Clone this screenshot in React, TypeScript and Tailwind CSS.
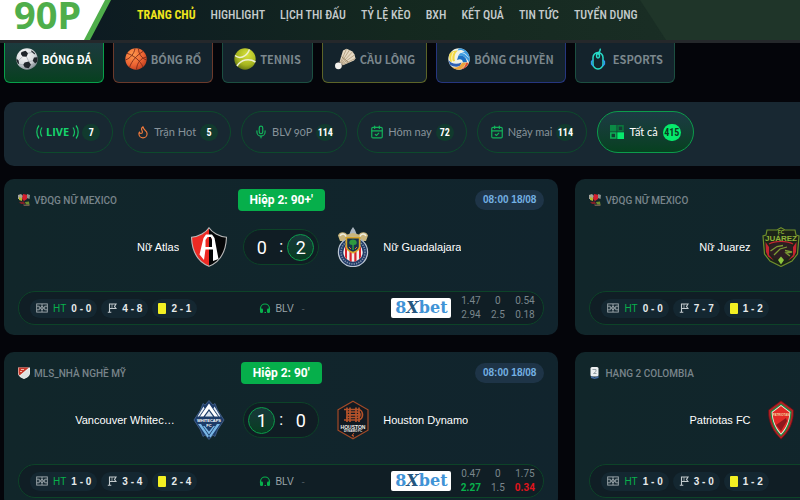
import type { ReactNode } from 'react'
import { CalendarCheck, Flame, Mic } from 'lucide-react'

interface Team {
  name: string
  crest: ReactNode
}

interface Match {
  league: string
  leagueIcon: ReactNode
  period: string
  time: string
  home: Team
  away: Team
  score: [number, number]
  leader: 0 | 1
  halfTime: string
  corners: string
  cards: string
  odds: { value: string; tone?: 'up' | 'down' }[][]
}

/* ---------- Sport icons ---------- */

const SoccerIcon = () => (
  <svg viewBox="0 0 22 22" className="size-[22px] shrink-0">
    <defs>
      <radialGradient id="soccer" cx="0.4" cy="0.3" r="0.75">
        <stop offset="0" stopColor="#ffffff" />
        <stop offset="0.6" stopColor="#d5d9dc" />
        <stop offset="1" stopColor="#77828a" />
      </radialGradient>
    </defs>
    <circle cx="11" cy="11" r="10.7" fill="url(#soccer)" />
    <g fill="#20262b">
      <path d="M5.5 4 9.6 2.8 12 5.2 10.6 8.8 6.6 8.6 4.8 6z" />
      <path d="M15.6 2.2 19 5.3 18.6 6.4 15.2 3.4z" />
      <path d="M18 9.5 21.6 9.2 21.4 13.6 19.2 15.4 16.7 12.8z" />
      <path d="M8.6 14.4 12.8 13.6 15 16.8 12.7 20.2 8.8 19.4 7.2 16.8z" />
      <path d="M.5 10.4 2.6 12.4 3.2 16.2 1.6 15.2.4 12.4z" />
    </g>
    <path d="M10.6 8.8 12.8 13.6M12 5.2l4-.8M16.7 12.8 12.8 13.6M6.6 8.6 2.6 12.4M7.2 16.8l-4-.6M15 16.8l4.2-1.4" stroke="#98a1a7" strokeWidth=".6" fill="none" />
  </svg>
)

const BasketballIcon = () => (
  <svg viewBox="0 0 22 22" className="size-[22px] shrink-0">
    <defs>
      <radialGradient id="basket" cx="0.35" cy="0.3" r="0.8">
        <stop offset="0" stopColor="#ff9a4c" />
        <stop offset="0.6" stopColor="#ec6333" />
        <stop offset="1" stopColor="#b93a1c" />
      </radialGradient>
    </defs>
    <circle cx="11" cy="11" r="10.7" fill="url(#basket)" />
    <g fill="none" stroke="#7c2a18" strokeWidth=".9">
      <path d="M2 5.3C8 7.2 15 12 18 19" />
      <path d="M18.3 3.2C12 7 6.5 13 4.5 19.5" />
      <path d="M10 .5C9 6 5.5 10 .5 12" />
      <path d="M21.5 9C16 10 12 14.5 11.5 21.5" />
      <path d="M13.5.7C13.5 6 17 10.5 21.6 12" />
    </g>
  </svg>
)

const TennisIcon = () => (
  <svg viewBox="0 0 22 22" className="size-[22px] shrink-0">
    <defs>
      <radialGradient id="tennis" cx="0.6" cy="0.3" r="0.8">
        <stop offset="0" stopColor="#d8e23c" />
        <stop offset="0.6" stopColor="#a5b51f" />
        <stop offset="1" stopColor="#56670f" />
      </radialGradient>
    </defs>
    <circle cx="11" cy="11" r="10.7" fill="url(#tennis)" />
    <g fill="none" stroke="#eef0cf" strokeWidth="1.5">
      <path d="M1 7.5C5 11 12 10 15.5 1.5" />
      <path d="M3 18C7 11.5 15 10 21.5 14" />
    </g>
  </svg>
)

const ShuttleIcon = () => (
  <svg viewBox="0 0 22 22" className="size-[22px] shrink-0">
    <path d="M5.5 14 9 2.5 12.5.8 15.5 2 18.5 3.5 20.5 6.5 21.5 10.5 20 12.5 8.5 17.5z" fill="#e6d9c3" />
    <path d="M6.5 14.5 12.5 1M7 15 15.5 2M7.5 15.5 18.5 3.8M8 16 20.5 7M8.3 16.8 21.3 10.5" stroke="#a58f6f" strokeWidth=".7" />
    <path d="M7.5 8.5 14.5 14.5" stroke="#8d7857" strokeWidth=".8" />
    <path d="M4.8 13.2 9.2 17.4 7.8 19 3.3 14.8z" fill="#3b3a38" />
    <circle cx="4.4" cy="17.8" r="3.4" fill="#f3f1ec" />
  </svg>
)

const VolleyballIcon = () => (
  <svg viewBox="0 0 22 22" className="size-[22px] shrink-0">
    <circle cx="11" cy="11" r="10.7" fill="#eef1e6" />
    <path d="M11 .3C17 .3 21.7 5 21.7 11L21 14.5C19 10 16 7 10.5 7.5 12 4.5 15 3.5 17 3.8 14.5 1.8 12 1.5 9.5 2.5z" fill="#3f9de0" />
    <path d="M10.5 7.5C16 7 18.5 10 19 14L15 14.5C14.5 11.5 12.5 10.5 9 12z" fill="#1c6fc2" />
    <path d="M1.5 6C4.5 2.5 8 2.5 10 2.5 6.5 5.5 6 9 7 13L2.5 14C1 11 1 8 1.5 6z" fill="#f1d743" />
    <path d="M.4 12C3 15.5 8 17 13.5 14.5L12 18C8 19.5 4.5 18.5 2 16.8z" fill="#2d5fb4" />
    <path d="M4 19C8 20.5 12 19 14 14.8L18 14.5C17 18.5 13 21.7 11 21.7 8 21.7 5.5 20.7 4 19z" fill="#eba43c" />
    <path d="M18 14.5 20.8 14.8C19.5 18.5 16.5 21 13 21.5 16 19.5 17.5 17.5 18 14.5z" fill="#de4f2c" />
    <path d="M5.5 4C3.5 7.5 3.3 10.5 4.5 14M13 4.5C15.5 4.5 18.5 6.5 20.5 9.5" fill="none" stroke="#fff" strokeWidth=".7" />
  </svg>
)

const MouseIcon = () => (
  <svg viewBox="0 0 22 22" className="size-[22px] shrink-0" fill="none" stroke="#27dcc8" strokeWidth="1.5">
    <path d="M11 7C11 3.5 13.5 4.5 13.3.6" />
    <rect x="6" y="4.5" width="10" height="16.5" rx="5" />
    <rect x="9.6" y="5" width="2.8" height="5" rx="1.4" />
    <path d="M6 12 4.6 13.5V16L6.3 18M16 12 17.4 13.5V16L15.7 18" stroke="#2f9df0" />
  </svg>
)

/* ---------- Small icons ---------- */

const WaveIcon = ({ flip = false }: { flip?: boolean }) => (
  <svg viewBox="0 0 7 14" className={flip ? 'h-3.5 w-[7px] -scale-x-100' : 'h-3.5 w-[7px]'} fill="none" stroke="#16c765" strokeWidth="1.2">
    <path d="M3 .5C.1 4 .1 10 3 13.5M6 2.5C4 5 4 9 6 11.5" />
  </svg>
)

const TilesIcon = () => (
  <svg viewBox="0 0 14 14" className="size-3.5 shrink-0">
    <rect width="6.5" height="6.5" fill="#0b8a45" />
    <rect x="8" y=".8" width="5" height="5" fill="none" stroke="#0a7a3d" strokeWidth="1.5" />
    <rect x=".8" y="8" width="5" height="5" fill="none" stroke="#0cb357" strokeWidth="1.5" />
    <rect x="7.3" y="7.3" width="6.7" height="6.7" fill="#06ea6c" />
  </svg>
)

const HeadsetIcon = () => (
  <svg viewBox="0 0 12 12" className="size-3 shrink-0">
    <path d="M1.5 8V6.5a4.5 4.5 0 0 1 9 0V8" fill="none" stroke="#08b04c" strokeWidth="1.2" />
    <rect x="1" y="6.5" width="3" height="4.5" rx="1.2" fill="#08b04c" />
    <rect x="8" y="6.5" width="3" height="4.5" rx="1.2" fill="#08b04c" />
    <path d="M5.5 10.5h1.5" stroke="#08b04c" strokeWidth="1.2" />
  </svg>
)

const PitchIcon = () => (
  <svg viewBox="0 0 12 10" className="h-2.5 w-3 shrink-0" fill="none" stroke="#a3adb1" strokeWidth=".9">
    <rect x=".7" y=".9" width="10.6" height="8.2" />
    <path d="M6 .9v8.2M.7 3.2h2.6v3.6H.7M11.3 3.2H8.7v3.6h2.6" />
    <circle cx="6" cy="5" r="1.5" />
  </svg>
)

const CornerIcon = () => (
  <svg viewBox="0 0 10 10" className="size-2.5 shrink-0" fill="none" stroke="#c3cbce" strokeWidth="1.1">
    <path d="M2.5 9.5V1H9L7.5 3.5 9 5.5H2.5M.8 9.3h3.5" />
    <path d="M5 1v4.5" strokeWidth=".7" />
  </svg>
)

const MexicoIcon = () => (
  <svg viewBox="0 0 12 12" className="size-3 shrink-0">
    <path d="M0 1 3 0 5 2 4 5 0 5z" fill="#a5a49c" />
    <path d="M5 0 10 1 9 5 6 7 4 5z" fill="#d41f2e" />
    <path d="M9 0 12 1 11.5 5 9 4z" fill="#8a928e" />
    <path d="M1 3 4 4 4 7 1 6z" fill="#b4b72e" />
    <path d="M1 8 6 7.5 7 10 3 10z" fill="#7f1f26" />
    <path d="M7 8 11 7.5 11.5 11 8 10.5z" fill="#6f8d2f" />
    <path d="M5 10.5h6.5V12H6z" fill="#6d5b4d" />
  </svg>
)

const MlsIcon = () => (
  <svg viewBox="0 0 12 12" className="size-3 shrink-0">
    <path d="M0 .5H12V6C12 9 9 11 6 12 3 11 0 9 0 6z" fill="#f0f0ee" />
    <path d="M.5.5H11L1.5 8.5C.8 7.5.5 6.5.5 5.5z" fill="#c8392b" />
    <path d="M3 2h3v1H3zM2 4h2v1H2z" fill="#f4b8a8" />
    <path d="M11.5 1.5V6C11.5 8.5 9 10.5 6 11.5 4 10.8 3 10 2 9z" fill="#dfe2e2" />
  </svg>
)

const ColombiaIcon = () => (
  <svg viewBox="0 0 12 12" className="size-3 shrink-0">
    <rect x="1.5" width="8" height="9.5" rx="1.5" fill="#eceff0" />
    <path d="M3.5 2.5h3.5v2L4.5 6.5h3" fill="none" stroke="#8b979d" strokeWidth=".9" />
    <path d="M2 9 5.5 10.5 9.5 9V11L5.5 12 2 11z" fill="#426a9f" />
  </svg>
)

/* ---------- Team crests ---------- */

const AtlasCrest = () => (
  <svg viewBox="0 0 40 40" className="size-10 shrink-0">
    <path d="M20 .5C17 5.5 10 9.5 2.5 10.3 3 23 7 34 20 39.5z" fill="#ee2a24" />
    <path d="M20 .5C23 5.5 30 9.5 37.5 10.3 37 23 33 34 20 39.5z" fill="#050607" />
    <path d="M20 .8C17 5.5 10 9.5 2.5 10.3 3 23 7 34 20 39.3 33 34 37 23 37.5 10.3 30 9.5 23 5.5 20 .8z" fill="none" stroke="#b9b9b9" strokeWidth="1.1" />
    <path d="M17 7.5h6L25.5 11 29.5 32 24 34V22.5H16.5L15 33 10.5 27.5 14.5 11z" fill="#fff" />
    <path d="M18.6 10h3.2L23 13v7H16.5v-7z" fill="#ee2a24" />
    <path d="M20 10h1.8L23 13v7H20z" fill="#050607" />
    <path d="M17 23h3v13l-3.5-2z" fill="#ee2a24" />
    <path d="M20 23h3l.5 11-3.5 2z" fill="#050607" />
  </svg>
)

const GuadalajaraCrest = () => (
  <svg viewBox="0 0 40 40" className="size-10 shrink-0">
    <path d="M20 0 22 3 24 8H16l2-5z" fill="#a9b3bd" />
    <path d="M5 8.5C6 4.5 12 4 14 7.5L20 6 26 7.5C28 4 34 4.5 35 8.5L33 14H7z" fill="#c9b57c" />
    <path d="M7 9c1.5-3 5-2.5 6 .5M33 9c-1.5-3-5-2.5-6 .5" fill="none" stroke="#f0eee0" strokeWidth="1.5" />
    <circle cx="20" cy="25" r="15" fill="#203a66" />
    <circle cx="20" cy="25" r="14.6" fill="none" stroke="#bcc6d1" strokeWidth="1.2" />
    <circle cx="20" cy="25" r="12" fill="none" stroke="#7f90a8" strokeWidth="1.6" strokeDasharray="1.3 1.1" />
    <circle cx="20" cy="25" r="9.7" fill="#f2f0ee" />
    <path d="M12 20v10l2 2.5V18zM16.5 18v16l2.2.7V18zM21.3 18v16.7l2.2-.7V18zM26 18v14.5l2-2.5V20z" fill="#d8232c" />
    <path d="M12.5 10h15v9C27.5 23 24 25 20 26.5 16 25 12.5 23 12.5 19z" fill="#d7a62b" />
    <path d="M14.2 11.5h11.6v7.5c0 3-2.5 4.5-5.8 5.8-3.3-1.3-5.8-2.8-5.8-5.8z" fill="#17324e" />
    <path d="M20 12.5C16.5 12.5 15.5 15.5 17 17.5L19.3 18v5h1.5v-5l2.3-.5c1.5-2 .4-5-3.1-5z" fill="#2f9a3f" />
    <path d="M16 20l2 2M24 20l-2 2" stroke="#d8732c" />
  </svg>
)

const JuarezCrest = () => (
  <svg viewBox="0 0 40 40" className="size-10 shrink-0">
    <path d="M20 .8 24 3H34L35 8 38 9 36.5 27 31 34 20 39.5 9 34 3.5 27 2 9 5 8 6 3H16z" fill="#1c2418" stroke="#6f8f2b" strokeWidth="1.2" />
    <path d="M4.5 15 8 20V28L13 33.5 7 29.5 5 25zM35.5 15 32 20V28L27 33.5 33 29.5 35 25z" fill="#c22630" />
    <path d="M8 20C12 15 17 16 19 14.5 24 16 29 15.5 32 20L31 27 26 31 20 33 13 31 8 26z" fill="#2d1e22" />
    <path d="M9.5 24 16 19.5 22 18.5M13 28 19 22 26 20M24 23.5 31 25 25 26 29 29" fill="none" stroke="#7d9c34" strokeWidth="1.3" />
    <path d="M8 17C14 13.5 26 13.5 32 17" fill="none" stroke="#c22630" strokeWidth="1.4" />
    <path d="M20 29.5 23 33 20 37.5 17 33z" fill="#8cc63e" />
    <text x="20" y="6.5" fontSize="5" fontWeight="700" textAnchor="middle" fill="#8fb338">FC</text>
    <text x="20" y="13.5" fontSize="8" fontWeight="700" textAnchor="middle" fill="#8fb338">JUÁREZ</text>
  </svg>
)

const WhitecapsCrest = () => (
  <svg viewBox="0 0 40 40" className="size-10 shrink-0">
    <path d="M20 .5 24 5 26 3.5 28.5 10 35 20 28.5 30 26 36.5 24 35 20 39.5 16 35 14 36.5 11.5 30 5 20 11.5 10 14 3.5 16 5z" fill="#1d3c69" stroke="#48658f" strokeWidth=".8" />
    <path d="M20 3.5 29 16.5H25.5L20 9 14.5 16.5H11z" fill="#fff" />
    <path d="M14.5 6.5 8.5 16.5H10L15.5 8.5zM25.5 6.5 31.5 16.5H30L24.5 8.5z" fill="#e3ebf4" />
    <path d="M20 11 24 16.5H16z" fill="#d8e3ef" />
    <path d="M9 24 18.5 37.5 20 36 12 24zM31 24 21.5 37.5 20 36 28 24zM14 26 20 34.5 26 26 24.5 26 20 31.5 15.5 26z" fill="#79b7e6" />
    <text x="20" y="21.5" fontSize="4" fontWeight="700" textAnchor="middle" fill="#fff">WHITECAPS</text>
    <text x="20" y="26.5" fontSize="4" fontWeight="700" textAnchor="middle" fill="#fff">FC</text>
  </svg>
)

const HoustonCrest = () => (
  <svg viewBox="0 0 40 40" className="size-10 shrink-0">
    <path d="M20 1.3 35 9.8V30.2L20 38.7 5 30.2V9.8z" fill="#121a22" stroke="#a34a27" strokeWidth="1.2" />
    <g fill="none" stroke="#b4522a" strokeWidth="1.7">
      <path d="M14 7.5V22M17 7.5V22M23 7.5V22M26 7.5V22M14 14.8H26" />
      <path d="M11 9.5H25C31 9.5 31 20 25 20H11M13 12H24C28 12 28 17.5 24 17.5H13" />
    </g>
    <text x="20" y="28.5" fontSize="5" fontWeight="700" textAnchor="middle" fill="#f2efec">HOUSTON</text>
    <text x="20" y="32" fontSize="3" fontWeight="700" textAnchor="middle" fill="#f2efec">DYNAMO FC</text>
    <path d="M21 33 19 35.5H20.5L20 37.5" fill="none" stroke="#d75f2c" strokeWidth=".9" />
  </svg>
)

const PatriotasCrest = () => (
  <svg viewBox="0 0 40 40" className="size-10 shrink-0">
    <path d="M20 .8 32.5 10C33 22 28 32 20 39.2 12 32 7 22 7.5 10z" fill="#b31f25" stroke="#5e1216" strokeWidth=".8" />
    <path d="M20 3.5 30.5 11.3C30.5 22 26.5 30.5 20 36.5 13.5 30.5 9.5 22 9.5 11.3z" fill="#1f8a3e" />
    <path d="M20 5 29.3 12C29 21.5 25.5 29 20 34.8 14.5 29 11 21.5 10.7 12z" fill="#f3f1e8" />
    <path d="M20 6 28.5 12.5C28 21 25 28 20 33.5 15 28 12 21 11.5 12.5z" fill="#e22b26" />
    <path d="M15 25 25 18 26 21 20 31z" fill="#8e161b" />
    <text x="20" y="15.8" fontSize="3" fontWeight="700" textAnchor="middle" fill="#f1d9a0">PATRIOTAS</text>
  </svg>
)

/* ---------- Data ---------- */

const navItems = ['TRANG CHỦ', 'HIGHLIGHT', 'LỊCH THI ĐẤU', 'TỶ LỆ KÈO', 'BXH', 'KẾT QUẢ', 'TIN TỨC', 'TUYỂN DỤNG']

const sports = [
  { label: 'BÓNG ĐÁ', icon: <SoccerIcon />, style: 'border-[#08a04a] bg-linear-to-b from-[#1c3a3e] to-[#06401f] text-white' },
  { label: 'BÓNG RỔ', icon: <BasketballIcon />, style: 'border-[#6b3a2b] bg-[#14232c] text-[#7b878c]' },
  { label: 'TENNIS', icon: <TennisIcon />, style: 'border-[#1c4f41] bg-[#14232c] text-[#7b878c]' },
  { label: 'CẦU LÔNG', icon: <ShuttleIcon />, style: 'border-[#5c6428] bg-[#14232c] text-[#7b878c]' },
  { label: 'BÓNG CHUYỀN', icon: <VolleyballIcon />, style: 'border-[#26367f] bg-[#14232c] text-[#7b878c]' },
  { label: 'ESPORTS', icon: <MouseIcon />, style: 'border-[#1c4f41] bg-[#14232c] text-[#7b878c]' },
]

const filters = [
  { label: 'Trận Hot', count: 5, icon: <Flame className="size-3.5 text-[#f07a3c]" /> },
  { label: 'BLV 90P', count: 114, icon: <Mic className="size-3.5 text-[#12b35a]" /> },
  { label: 'Hôm nay', count: 72, icon: <CalendarCheck className="size-3.5 text-[#12b35a]" /> },
  { label: 'Ngày mai', count: 114, icon: <CalendarCheck className="size-3.5 text-[#12b35a]" /> },
]

const matches: Match[] = [
  {
    league: 'VĐQG NỮ MEXICO',
    leagueIcon: <MexicoIcon />,
    period: "Hiệp 2: 90+'",
    time: '08:00 18/08',
    home: { name: 'Nữ Atlas', crest: <AtlasCrest /> },
    away: { name: 'Nữ Guadalajara', crest: <GuadalajaraCrest /> },
    score: [0, 2],
    leader: 1,
    halfTime: '0 - 0',
    corners: '4 - 8',
    cards: '2 - 1',
    odds: [
      [{ value: '1.47' }, { value: '0' }, { value: '0.54' }],
      [{ value: '2.94' }, { value: '2.5' }, { value: '0.18' }],
    ],
  },
  {
    league: 'VĐQG NỮ MEXICO',
    leagueIcon: <MexicoIcon />,
    period: "Hiệp 2: 90+'",
    time: '08:00 18/08',
    home: { name: 'Nữ Juarez', crest: <JuarezCrest /> },
    away: { name: '', crest: null },
    score: [0, 0],
    leader: 0,
    halfTime: '0 - 0',
    corners: '7 - 7',
    cards: '1 - 2',
    odds: [],
  },
  {
    league: 'MLS_NHÀ NGHỀ MỸ',
    leagueIcon: <MlsIcon />,
    period: "Hiệp 2: 90'",
    time: '08:00 18/08',
    home: { name: 'Vancouver Whitecaps', crest: <WhitecapsCrest /> },
    away: { name: 'Houston Dynamo', crest: <HoustonCrest /> },
    score: [1, 0],
    leader: 0,
    halfTime: '1 - 0',
    corners: '3 - 4',
    cards: '2 - 4',
    odds: [
      [{ value: '0.47' }, { value: '0' }, { value: '1.75' }],
      [{ value: '2.27', tone: 'up' }, { value: '1.5' }, { value: '0.34', tone: 'down' }],
    ],
  },
  {
    league: 'HẠNG 2 COLOMBIA',
    leagueIcon: <ColombiaIcon />,
    period: "Hiệp 2: 90'",
    time: '08:00 18/08',
    home: { name: 'Patriotas FC', crest: <PatriotasCrest /> },
    away: { name: '', crest: null },
    score: [1, 0],
    leader: 0,
    halfTime: '1 - 0',
    corners: '3 - 0',
    cards: '1 - 2',
    odds: [],
  },
]

const toneClass = {
  up: 'font-bold text-[#08b04c]',
  down: 'font-bold text-[#e0141c]',
}

/* ---------- Sections ---------- */

function Header() {
  return (
    <header className="relative flex h-[43px] items-start border-b-3 border-[#25282b] bg-linear-to-r from-[#0b1722] via-[#14281f] to-[#1c3027]">
      <svg viewBox="0 0 160 40" preserveAspectRatio="none" className="absolute top-0 right-0 h-10 w-40">
        <path d="M0 0H160V40H26z" fill="#1f3529" />
      </svg>
      <a href="#" className="relative h-10 w-[111px] shrink-0">
        <svg viewBox="0 0 111 40" className="absolute inset-0 h-full w-full">
          <path d="M0 0H111L90 40H0z" fill="#4fae4b" />
          <path d="M0 0H105L84 40H0z" fill="#fff" />
        </svg>
        <span className="relative block pl-3.5 font-['Noto_Sans',sans-serif] text-[38px] leading-7 font-bold text-[#4fae4b]">90P</span>
      </a>
      <nav className="relative flex gap-[15px] pt-1.5 pl-[26px] font-['Roboto_Condensed',Roboto,sans-serif] text-[12px] leading-[18px] font-medium whitespace-nowrap text-[#c5cbcc]">
        {navItems.map((item, index) => (
          <a key={item} href="#" className={index === 0 ? 'font-bold text-[#f0e51c]' : ''}>
            {item}
          </a>
        ))}
      </nav>
    </header>
  )
}

function SportTabs() {
  return (
    <div className="flex gap-[9px] pl-1">
      {sports.map((sport) => (
        <button
          key={sport.label}
          type="button"
          className={`flex h-10 shrink-0 items-center gap-1 rounded-b-md border border-t-0 px-[11px] pb-2 font-['Noto_Sans_CJK_SC',sans-serif] text-[11px] leading-4 font-bold whitespace-nowrap ${sport.style}`}
        >
          {sport.icon}
          {sport.label}
        </button>
      ))}
    </div>
  )
}

function Count({ value, active = false }: { value: number; active?: boolean }) {
  return (
    <span
      className={`flex h-[17px] w-[18px] items-center justify-center rounded-full font-['Roboto_Condensed',Roboto,sans-serif] text-[10px] font-bold ${
        active ? 'bg-[#06ea6c] text-[#0b3a22]' : 'bg-[#113a2e] text-white'
      }`}
    >
      {value}
    </span>
  )
}

function Filters() {
  const pill = 'flex h-[42px] shrink-0 items-center rounded-full border px-3 whitespace-nowrap'

  return (
    <div className="mt-[19px] ml-1 flex gap-2.5 rounded-l-[10px] bg-[#182832] pt-[9px] pb-[13px] pl-[19px] font-['Lato',sans-serif] text-[11px]">
      <button type="button" className={`${pill} gap-[3px] border-[#0d4a2c] font-['Open_Sans',sans-serif] font-bold text-[#16d46c]`}>
        <WaveIcon />
        <span>LIVE</span>
        <WaveIcon flip />
        <Count value={7} />
      </button>
      {filters.map((filter) => (
        <button key={filter.label} type="button" className={`${pill} gap-1 border-[#0d4a2c] text-[#87939a]`}>
          {filter.icon}
          <span className="oldstyle-nums">{filter.label}</span>
          <Count value={filter.count} />
        </button>
      ))}
      <button
        type="button"
        className={`${pill} gap-[5px] border-[#0c9c4b] bg-linear-to-b from-[#1c3a44] to-[#06401f] text-white`}
      >
        <TilesIcon />
        <span>Tất cả</span>
        <Count value={415} active />
      </button>
    </div>
  )
}

function Chip({ children }: { children: ReactNode }) {
  return (
    <span className="flex h-[19px] items-center gap-[5px] rounded-full bg-[#142731] px-1.5 text-[10px] font-bold text-[#e6eaeb]">
      {children}
    </span>
  )
}

function Score({ value, leading }: { value: number; leading: boolean }) {
  return (
    <span
      className={`flex size-[27px] items-center justify-center rounded-full border ${
        leading ? 'border-[#0c9c4b] bg-linear-to-b from-[#17383a] to-[#073d20]' : 'border-transparent'
      }`}
    >
      {value}
    </span>
  )
}

function MatchCard({ match }: { match: Match }) {
  return (
    <article className="rounded-[10px] bg-linear-to-r from-[#11262a] to-[#11242d] px-3.5 py-2.5">
      <div className="grid grid-cols-[1fr_auto_1fr] items-center">
        <h2 className="flex items-center gap-1 font-['Roboto',sans-serif] text-[10px] font-medium text-[#78848a]">
          {match.leagueIcon}
          {match.league}
        </h2>
        <span className="h-[22px] rounded bg-[#06af4b] px-3 font-['Roboto',sans-serif] text-[12px] leading-[22px] font-bold text-white">
          {match.period}
        </span>
        <time className="h-5 justify-self-end rounded-full bg-[#1e3447] px-2 text-[10px] leading-5 font-bold text-[#74b0e2]">{match.time}</time>
      </div>

      <div className="mt-4 grid h-10 grid-cols-[1fr_auto_1fr] items-center text-[11px] text-white">
        <div className="flex items-center justify-end gap-2.5">
          <span className="w-[104px] truncate text-right">{match.home.name}</span>
          {match.home.crest}
        </div>
        <div className="mx-3.5 flex h-9 w-[76px] items-center justify-between rounded-full border border-[#0d4328] bg-[#101d24] px-1 font-['Roboto',sans-serif] text-[18px]">
          <Score value={match.score[0]} leading={match.leader === 0} />
          <span className="text-[16px]">:</span>
          <Score value={match.score[1]} leading={match.leader === 1} />
        </div>
        <div className="flex items-center gap-2.5">
          {match.away.crest}
          <span className="truncate">{match.away.name}</span>
        </div>
      </div>

      <div className="mt-6 grid h-[34px] grid-cols-[1fr_auto_1fr] items-center rounded-full border border-[#0d4328] bg-[#101e25] pr-[5px] pl-[11px]">
        <div className="flex gap-1">
          <Chip>
            <PitchIcon />
            <span className="font-normal text-[#08b04c]">HT</span>
            {match.halfTime}
          </Chip>
          <Chip>
            <CornerIcon />
            {match.corners}
          </Chip>
          <Chip>
            <span className="h-[11px] w-2 rounded-[1px] bg-[#f2ef22]" />
            {match.cards}
          </Chip>
        </div>
        <div className="flex items-center gap-1 text-[10px] text-[#9ba5a9]">
          <HeadsetIcon />
          BLV
          <span className="px-1 text-[#4b585e]">-</span>
        </div>
        <div className="flex items-center justify-end gap-1.5">
          <a href="#" className="flex h-5 w-[60px] items-center justify-center rounded-[2px] bg-white font-['DejaVu_Serif',serif] text-[16px] font-bold text-[#3f93d6]">
            8<span className="text-[#24567f] italic">X</span>bet
          </a>
          <table className="w-[81px] table-fixed text-center font-['Roboto',sans-serif] text-[10px] leading-[14px] text-[#7a868c]">
            <tbody>
              {match.odds.map((row, rowIndex) => (
                <tr key={rowIndex}>
                  {row.map((odd, index) => (
                    <td key={index} className={odd.tone ? toneClass[odd.tone] : ''}>
                      {odd.value}
                    </td>
                  ))}
                </tr>
              ))}
            </tbody>
          </table>
        </div>
      </div>
    </article>
  )
}

export default function App() {
  return (
    <div className="h-screen overflow-hidden bg-[#04050a] font-['Liberation_Sans',sans-serif]">
      <Header />
      <main>
        <SportTabs />
        <Filters />
        <section className="mt-[13px] grid grid-cols-[70%_70%] gap-[17px] px-1">
          {matches.map((match, index) => (
            <MatchCard key={index} match={match} />
          ))}
        </section>
      </main>
    </div>
  )
}
